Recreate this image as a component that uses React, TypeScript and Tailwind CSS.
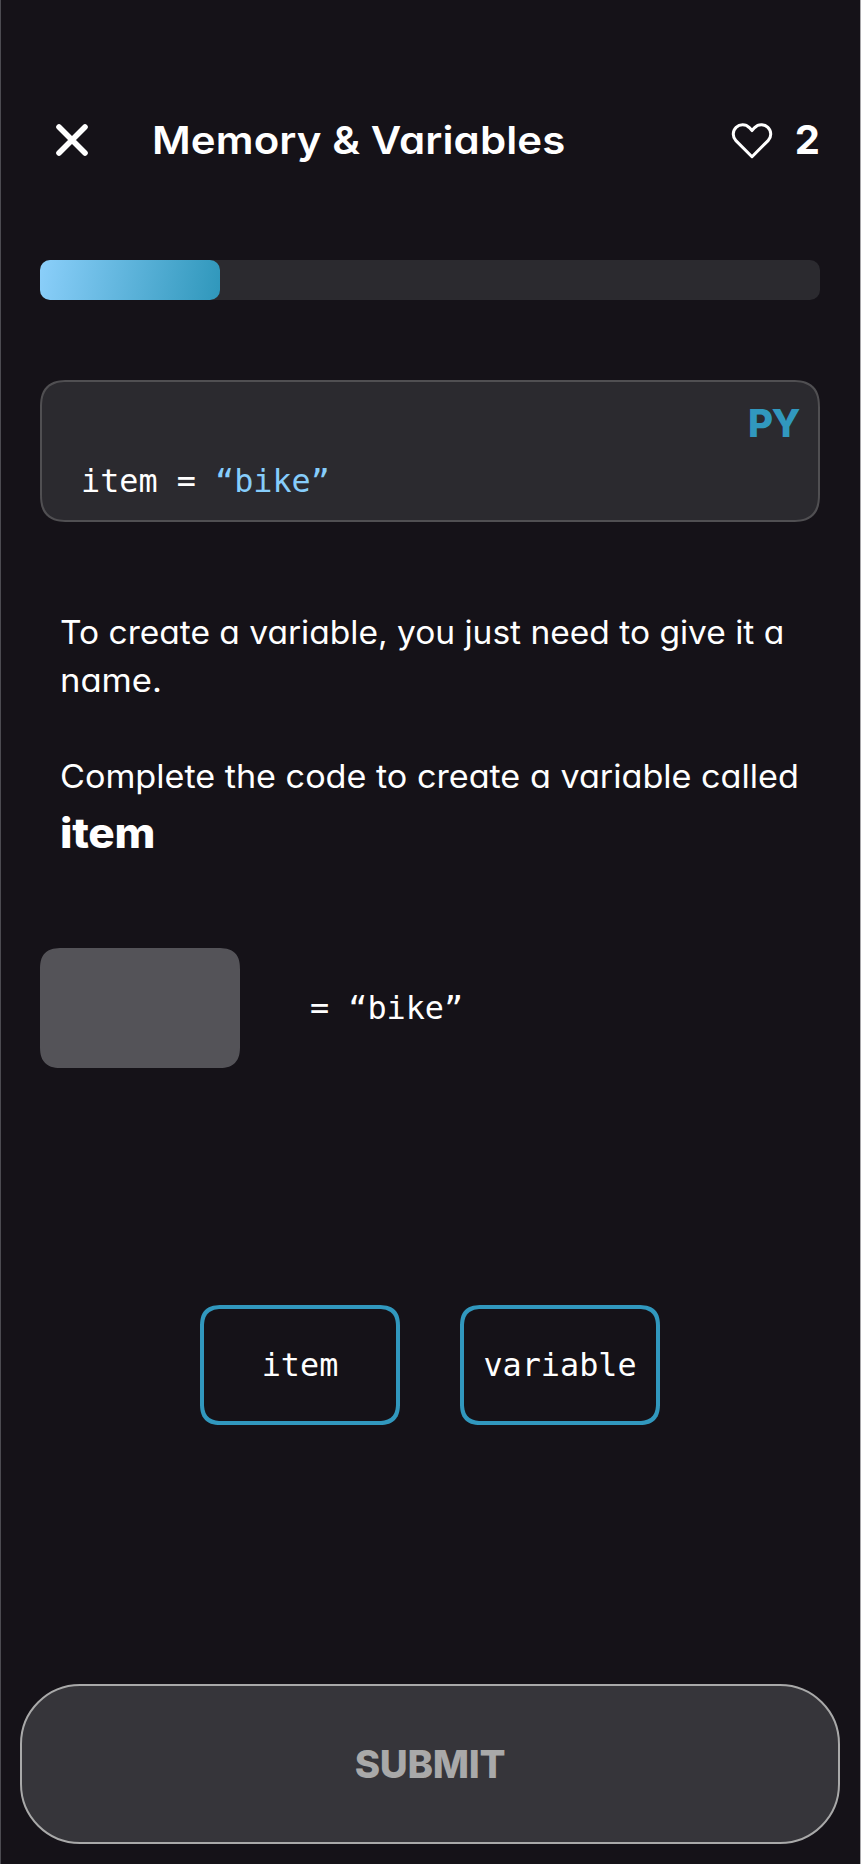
import type { ReactNode } from "react";

function CloseIcon() {
  return (
    <svg width="34" height="34" viewBox="0 0 34 34" fill="none" stroke="white" strokeWidth="5.6" strokeLinecap="round">
      <path d="M4 4 30 30M30 4 4 30" />
    </svg>
  );
}

function HeartIcon() {
  return (
    <svg width="42" height="36" viewBox="0 0 42 36" fill="none" stroke="white" strokeWidth="3" strokeLinejoin="round" className="overflow-visible">
      <path d="M21 34.7 4.9 18.6A9.3 9.3 0 0 1 18.3 5.6L21 8.6L23.7 5.6A9.3 9.3 0 0 1 37.1 18.6Z" />
    </svg>
  );
}

function Choice({ children }: { children: ReactNode }) {
  return (
    <button className="flex h-[120px] w-[200px] items-center justify-center rounded-[17px] border-4 border-[#3198be] supports-[corner-shape:squircle]:rounded-[22px] [corner-shape:superellipse(1.4)]">
      {children}
    </button>
  );
}

export default function App() {
  return (
    <main className="flex h-[1864px] w-[861px] flex-col border-x border-l-[#4c4b51] border-r-[#a9a8ab] bg-[#151218] font-['Inter',sans-serif] text-white [font-feature-settings:'cv11']">
      <header className="mt-[110px] flex h-[60px] items-center pl-[54px] pr-[42px]">
        <CloseIcon />
        <h1 className="ml-[63px] origin-left scale-x-[1.09] whitespace-nowrap text-[38.5px] font-semibold leading-[60px] tracking-[0.1px]">Memory &amp; Variables</h1>
        <div className="ml-auto flex items-center gap-[22px]">
          <HeartIcon />
          <span className="text-[40px] font-bold leading-[60px] tracking-[-2px]">2</span>
        </div>
      </header>

      <div className="ml-[39px] mt-[90px] h-10 w-[780px] rounded-[10px] bg-[#2b2a2f]">
        <div className="h-full w-[180px] rounded-[10px] bg-[linear-gradient(100deg,#8bcffa,#2f97bb)]" />
      </div>

      <section className="ml-[39px] mt-20 flex h-[142px] w-[780px] flex-col rounded-[22px] border-2 border-[#504f52] bg-[#2b2a2f] supports-[corner-shape:squircle]:rounded-[28px] [corner-shape:superellipse(1.4)]">
        <div className="mr-[19px] mt-[11px] self-end text-[38.5px] font-extrabold leading-[60px] tracking-[-1.5px] text-[#3198be]">PY</div>
        <code className="ml-[39px] mt-[4px] whitespace-pre font-['DejaVu_Sans_Mono',monospace] text-[31.8px] leading-[48px]">
          item = <span className="text-[#86cdfb]">“bike”</span>
        </code>
      </section>

      <section className="ml-[59px] mt-[87px] whitespace-nowrap text-[32px] leading-[48px]">
        <p>
          <span className="block w-fit origin-left scale-x-[1.047]">To create a variable, you just need to give it a</span>
          <span className="block w-fit origin-left scale-x-[1.08]">name.</span>
        </p>
        <p className="mt-[48px] w-fit origin-left scale-x-[1.067]">Complete the code to create a variable called</p>
        <p className="mt-[2px] w-fit origin-left scale-x-[1.075] text-[41px] font-extrabold leading-[60px] tracking-[-0.3px]">item</p>
      </section>

      <div className="ml-[39px] mt-[85px] flex h-[120px] items-center">
        <div className="h-[120px] w-[200px] rounded-[17px] bg-[#545358] supports-[corner-shape:squircle]:rounded-[22px] [corner-shape:superellipse(1.4)]" />
        <code className="ml-[70px] whitespace-pre font-['DejaVu_Sans_Mono',monospace] text-[31.8px] leading-[48px]">= “bike”</code>
      </div>

      <div className="ml-[199px] mt-[237px] flex gap-[60px] font-['DejaVu_Sans_Mono',monospace] text-[31.8px] leading-[48px]">
        <Choice>item</Choice>
        <Choice>variable</Choice>
      </div>

      <button className="mb-5 ml-[19px] mt-auto flex h-[160px] w-[820px] items-center justify-center rounded-[60px] border-2 border-[#a9a9a9] bg-[#36353a] pt-[2px] text-[38.5px] font-extrabold tracking-[-0.3px] text-[#a9a9a9]">
        SUBMIT
      </button>
    </main>
  );
}
